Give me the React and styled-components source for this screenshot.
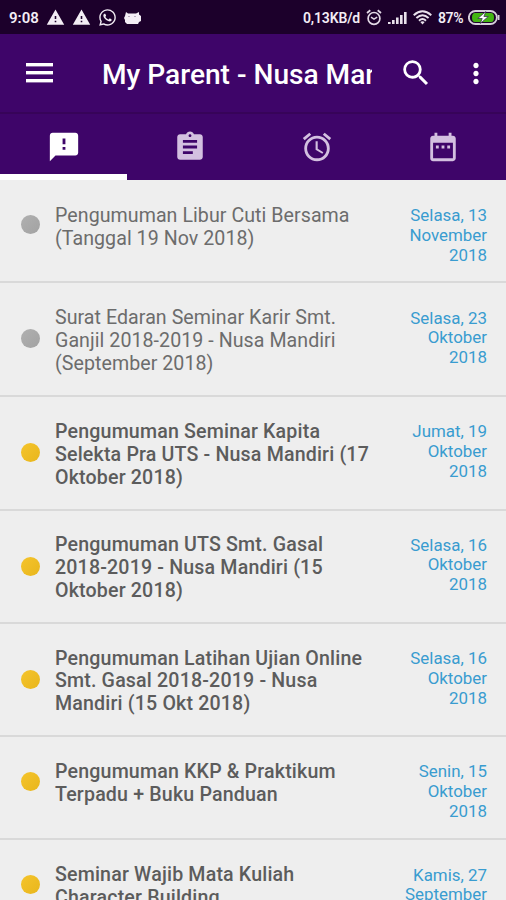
import React from "react";
import styled, { createGlobalStyle } from "styled-components";
import {
  MdSearch,
  MdMoreVert,
  MdFeedback,
  MdAssignment,
  MdAlarm,
  MdDateRange,
  MdWarning,
} from "react-icons/md";
import { FaWhatsapp } from "react-icons/fa";

const GlobalStyle = createGlobalStyle`
  * { box-sizing: border-box; }
  body { margin: 0; background: #eeeeee; overflow: hidden; }
`;

const Screen = styled.div`
  width: 506px;
  height: 900px;
  display: flex;
  flex-direction: column;
  overflow: hidden;
  background: #eeeeee;
  font-family: Roboto, "Liberation Sans", sans-serif;
`;

const StatusBar = styled.header`
  flex: none;
  height: 34px;
  display: flex;
  justify-content: space-between;
  padding: 0 6px 0 9px;
  background: #1c002b;
  color: #f3edf5;
`;

const StatusGroup = styled.div`
  display: flex;
  align-items: center;
  padding-top: 1px;
  gap: ${(p) => p.$gap}px;
  svg { display: block; flex: none; }
`;

const StatusText = styled.span`
  width: ${(p) => p.$width}px;
  font-size: ${(p) => p.$size}px;
  font-weight: 600;
  line-height: 20px;
  letter-spacing: ${(p) => p.$spacing || 0}px;
  white-space: nowrap;
`;

const AppBar = styled.div`
  flex: none;
  height: 80px;
  display: flex;
  align-items: center;
  background: #3e0569;
  border-bottom: 2px solid #370459;
  color: #ffffff;
`;

const IconButton = styled.button`
  flex: none;
  width: ${(p) => p.$width}px;
  height: 78px;
  display: flex;
  align-items: center;
  justify-content: center;
  padding: 0;
  border: 0;
  background: none;
  color: inherit;
`;

const Title = styled.h1`
  width: 270px;
  margin: 0 0 0 23px;
  overflow: hidden;
  white-space: nowrap;
  font-size: 28.1px;
  font-weight: 500;
  line-height: 36px;
  padding-top: 4px;
`;

const Tabs = styled.nav`
  flex: none;
  height: 66px;
  display: grid;
  grid-template-columns: 127px 126px 127px 126px;
  background: #3e0569;
`;

const Tab = styled.button`
  display: flex;
  align-items: center;
  justify-content: center;
  padding: 5px 0 0;
  border: 0;
  border-bottom: 6px solid ${(p) => (p.$active ? "#ffffff" : "#3e0569")};
  background: none;
  color: ${(p) => (p.$active ? "#ffffff" : "#d3c0e0")};
`;

const List = styled.main`
  flex: 1;
  min-height: 0;
  overflow: hidden;
  padding-top: 1px;
`;

const Row = styled.article`
  height: ${(p) => p.$height}px;
  display: grid;
  grid-template-columns: 55px 1fr 110px;
  border-bottom: 2px solid #d9d9d9;
  padding-right: 19px;
`;

const Dot = styled.span`
  align-self: start;
  width: 19px;
  height: 19px;
  margin: ${(p) => p.$top}px 0 0 21px;
  border-radius: 50%;
  background: ${(p) => (p.$unread ? "linear-gradient(135deg, #f5c42c, #e8b61c)" : "linear-gradient(135deg, #b0b0b0, #a2a2a2)")};
`;

const Subject = styled.h2`
  margin: 23.6px 0 0;
  font-size: 19.6px;
  line-height: 22.9px;
  font-weight: ${(p) => (p.$unread ? 500 : 400)};
  letter-spacing: ${(p) => (p.$unread ? 0.17 : 0.06)}px;
  color: ${(p) => (p.$unread ? "#5c5c5c" : "#6c6c6c")};
  white-space: pre;
`;

const DateText = styled.time`
  margin-top: 25.2px;
  font-size: 16.9px;
  line-height: 19.7px;
  text-align: right;
  white-space: pre;
  color: #399cd0;
`;

const Menu = () => (
  <svg width="27" height="20" viewBox="0 0 27 20" fill="currentColor">
    <rect y="0" width="27" height="3.4" />
    <rect y="8" width="27" height="3.4" />
    <rect y="16" width="27" height="3.4" />
  </svg>
);

const Robot = () => (
  <svg width="17" height="14" viewBox="0 0 17 14">
    <path d="M2 1l2 1.5h8L15 1v2.5l2 1.5v5l-2 1-1 2H3l-2-2V9L0 7l1-2z" fill="#f3edf5" />
    <path d="M4 6l1-1 1 1M10 6l1-1 1 1" fill="none" stroke="#a99bb2" strokeWidth=".8" />
  </svg>
);

const StatusAlarm = () => (
  <svg width="16" height="17" viewBox="0 0 16 17" fill="none" stroke="#e2d9e6">
    <circle cx="8" cy="9.4" r="5.9" strokeWidth="1.7" />
    <path d="M1 4l3.3-2.7M15 4l-3.3-2.7" strokeWidth="1.8" />
    <path d="M5 8.2l3 2 3.2-2" strokeWidth="1.5" />
  </svg>
);

const Signal = () => (
  <svg width="19" height="14" viewBox="0 0 19 14" fill="#e9e1ec">
    <rect x="0" y="11" width="2.6" height="2" />
    <rect x="4" y="9" width="2.6" height="4" />
    <rect x="8" y="6.5" width="2.6" height="6.5" />
    <rect x="12" y="4" width="2.6" height="9" />
    <rect x="16" y="1" width="2.6" height="12" />
  </svg>
);

const Wifi = () => (
  <svg width="19" height="15" viewBox="0 0 19 15" fill="none" stroke="#e9e1ec" strokeWidth="1.9">
    <path d="M.7 5.2Q9.5-2.5 18.3 5.2" />
    <path d="M3.4 8Q9.5 2.4 15.6 8" />
    <path d="M6 10.7q3.5-3.3 7 0" />
    <path d="M7.3 12L9.5 14.6 11.7 12q-2.2-1.5-4.4 0z" fill="#e9e1ec" stroke="none" />
  </svg>
);

const Battery = () => (
  <svg width="32" height="15" viewBox="0 0 32 15">
    <rect x=".9" y="1" width="28" height="13" rx="6.5" fill="#1c002b" stroke="#d8cedd" strokeWidth="1.9" />
    <path d="M30.7 5v5" stroke="#d8cedd" strokeWidth="1.6" />
    <path d="M7 3h16q3 0 3 4.5T23 12H7q-3 0-3-4.5T7 3z" fill="#43b512" />
    <path d="M17.8 1.5l-8 7h4.4l-1.9 5 8-7h-4.4z" fill="#fff" stroke="#31244a" strokeWidth=".7" />
  </svg>
);

const tabs = [
  { Icon: MdFeedback, label: "Pengumuman" },
  { Icon: MdAssignment, label: "Tugas" },
  { Icon: MdAlarm, label: "Alarm" },
  { Icon: MdDateRange, label: "Kalender" },
];

const items = [
  { title: "Pengumuman Libur Cuti Bersama\n(Tanggal 19 Nov 2018)", date: "Selasa, 13\nNovember\n2018", height: 102.4, dot: 34 },
  { title: "Surat Edaran Seminar Karir Smt.\nGanjil 2018-2019 - Nusa Mandiri\n(September 2018)", date: "Selasa, 23\nOktober\n2018", height: 113.9, dot: 46 },
  { title: "Pengumuman Seminar Kapita\nSelekta Pra UTS - Nusa Mandiri (17\nOktober 2018)", date: "Jumat, 19\nOktober\n2018", height: 113.3, dot: 46, unread: true },
  { title: "Pengumuman UTS Smt. Gasal\n2018-2019 - Nusa Mandiri (15\nOktober 2018)", date: "Selasa, 16\nOktober\n2018", height: 113.4, dot: 46, unread: true },
  { title: "Pengumuman Latihan Ujian Online\nSmt. Gasal 2018-2019 - Nusa\nMandiri (15 Okt 2018)", date: "Selasa, 16\nOktober\n2018", height: 113.3, dot: 46, unread: true },
  { title: "Pengumuman KKP & Praktikum\nTerpadu + Buku Panduan", date: "Senin, 15\nOktober\n2018", height: 103.2, dot: 34.5, unread: true },
  { title: "Seminar Wajib Mata Kuliah\nCharacter Building", date: "Kamis, 27\nSeptember\n2018", height: 103, dot: 34.5, unread: true },
];

export default function App() {
  return (
    <>
      <GlobalStyle />
      <Screen>
        <StatusBar>
          <StatusGroup $gap={7}>
            <StatusText $size={15} $width={30}>9:08</StatusText>
            <MdWarning size={19} />
            <MdWarning size={19} />
            <FaWhatsapp size={19} />
            <Robot />
          </StatusGroup>
          <StatusGroup $gap={6}>
            <StatusText $size={14} $width={57} $spacing={-0.15}>0,13KB/d</StatusText>
            <StatusAlarm />
            <Signal />
            <Wifi />
            <StatusText $size={14} $width={24} $spacing={-0.4}>87%</StatusText>
            <Battery />
          </StatusGroup>
        </StatusBar>
        <AppBar>
          <IconButton $width={79} aria-label="Menu"><Menu /></IconButton>
          <Title>My Parent - Nusa Mandiri</Title>
          <IconButton $width={88} aria-label="Cari"><MdSearch size={34} /></IconButton>
          <IconButton $width={32} aria-label="Lainnya"><MdMoreVert size={35} /></IconButton>
        </AppBar>
        <Tabs>
          {tabs.map(({ Icon, label }, i) => (
            <Tab key={label} $active={i === 0} aria-label={label}><Icon size={34} /></Tab>
          ))}
        </Tabs>
        <List>
          {items.map((it) => (
            <Row key={it.title} $height={it.height}>
              <Dot $top={it.dot} $unread={it.unread} />
              <Subject $unread={it.unread}>{it.title}</Subject>
              <DateText>{it.date}</DateText>
            </Row>
          ))}
        </List>
      </Screen>
    </>
  );
}
